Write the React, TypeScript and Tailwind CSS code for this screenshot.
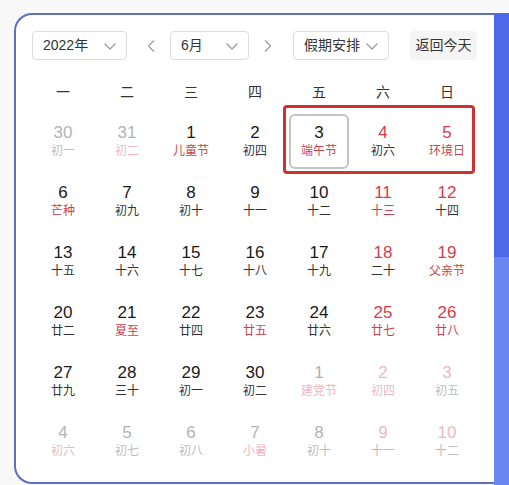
import React from "react";

type Cell = { d: string; l: string; dc: string; lc: string; sel?: boolean };

const K = "text-[#1a1a1a]";
const KL = "text-[#333333]";
const R = "text-[#d43d4c]";
const RL = "text-[#cc3f4d]";
const G = "text-[#b3b3b3]";
const GL = "text-[#bdbdbd]";
const P = "text-[#edb8c0]";

const c = (d: string, l: string, dc: string, lc: string, sel = false): Cell => ({ d, l, dc, lc, sel });

const rows: Cell[][] = [
  [c("30", "初一", G, GL), c("31", "初二", G, P), c("1", "儿童节", K, RL), c("2", "初四", K, KL), c("3", "端午节", K, RL, true), c("4", "初六", R, KL), c("5", "环境日", R, RL)],
  [c("6", "芒种", K, RL), c("7", "初九", K, KL), c("8", "初十", K, KL), c("9", "十一", K, KL), c("10", "十二", K, KL), c("11", "十三", R, RL), c("12", "十四", R, KL)],
  [c("13", "十五", K, KL), c("14", "十六", K, KL), c("15", "十七", K, KL), c("16", "十八", K, KL), c("17", "十九", K, KL), c("18", "二十", R, KL), c("19", "父亲节", R, RL)],
  [c("20", "廿二", K, KL), c("21", "夏至", K, RL), c("22", "廿四", K, KL), c("23", "廿五", K, RL), c("24", "廿六", K, KL), c("25", "廿七", R, RL), c("26", "廿八", R, RL)],
  [c("27", "廿九", K, KL), c("28", "三十", K, KL), c("29", "初一", K, KL), c("30", "初二", K, KL), c("1", "建党节", G, P), c("2", "初四", P, P), c("3", "初五", P, GL)],
  [c("4", "初六", G, P), c("5", "初七", G, GL), c("6", "初八", G, GL), c("7", "小暑", G, P), c("8", "初十", G, GL), c("9", "十一", P, GL), c("10", "十二", P, GL)],
];

const weekdays = ["一", "二", "三", "四", "五", "六", "日"];

function Chevron({ dir = "down", className = "" }: { dir?: "down" | "left" | "right"; className?: string }) {
  const d =
    dir === "down" ? "M3 6l5 5 5-5" : dir === "left" ? "M10 2L4 8l6 6" : "M6 2l6 6-6 6";
  return (
    <svg viewBox="0 0 16 16" className={className} fill="none" stroke="currentColor" strokeWidth="1.3" strokeLinecap="round" strokeLinejoin="round">
      <path d={d} />
    </svg>
  );
}

function Select({ label, w }: { label: string; w: string }) {
  return (
    <div className={`${w} h-[29px] border border-[#dcdcdc] rounded-[4px] flex items-center justify-between pl-[10px] pr-[8px] bg-white`}>
      <span className="text-[14px] text-[#333333]">{label}</span>
      <Chevron className="w-[16px] h-[16px] text-[#999999]" />
    </div>
  );
}

export default function App() {
  return (
    <div
      className="w-[509px] h-[485px] bg-[#f8f8f8] overflow-hidden flex pt-[13px]"
      style={{ fontFamily: '"Liberation Sans", "Noto Sans CJK SC", sans-serif' }}
    >
      <div className="ml-[14px] w-[480px] h-[471px] bg-white border-l-2 border-t-2 border-b-2 border-[#5e6fbe] rounded-l-[18px] pl-[15px] pt-[16px]">
        <div className="flex items-center h-[29px]">
          <div className="ml-[1px]">
            <Select label="2022年" w="w-[95px]" />
          </div>
          <Chevron dir="left" className="ml-[18px] w-[14px] h-[16px] text-[#999999]" />
          <div className="ml-[11px]">
            <Select label="6月" w="w-[79px]" />
          </div>
          <Chevron dir="right" className="ml-[11px] w-[14px] h-[16px] text-[#999999]" />
          <div className="ml-[19px]">
            <Select label="假期安排" w="w-[96px]" />
          </div>
          <div className="ml-[21px] w-[67px] h-[29px] bg-[#f4f4f4] rounded-[4px] flex items-center justify-center text-[14px] text-[#333333]">
            返回今天
          </div>
        </div>
        <div className="grid grid-cols-7 w-[448px] mt-[13px] h-[38px] items-center">
          {weekdays.map((w) => (
            <div key={w} className="text-center text-[14px] text-[#333333]">
              {w}
            </div>
          ))}
        </div>
        <div className="relative w-[448px]">
          {rows.map((row, ri) => (
            <div key={ri} className="grid grid-cols-7 h-[60px]">
              {row.map((cell, ci) => (
                <div key={ci} className="flex items-center justify-center">
                  <div
                    className={`w-[60px] h-[55px] flex flex-col items-center justify-center rounded-[6px] ${
                      cell.sel ? "border-2 border-[#c4c4c4]" : ""
                    }`}
                  >
                    <span className={`text-[17px] leading-[20px] ${cell.dc}`}>{cell.d}</span>
                    <span className={`text-[12px] leading-[16px] ${cell.lc}`}>{cell.l}</span>
                  </div>
                </div>
              ))}
            </div>
          ))}
          <div className="absolute left-[252px] top-[-6px] w-[192px] h-[69px] border-[3px] border-[#d0302f] rounded-[4px] pointer-events-none" />
        </div>
      </div>
      <div className="w-[15px] h-[472px] flex flex-col">
        <div className="h-[244px] bg-[#4b69e8]" />
        <div className="flex-1 bg-[#6a86ef]" />
      </div>
    </div>
  );
}
